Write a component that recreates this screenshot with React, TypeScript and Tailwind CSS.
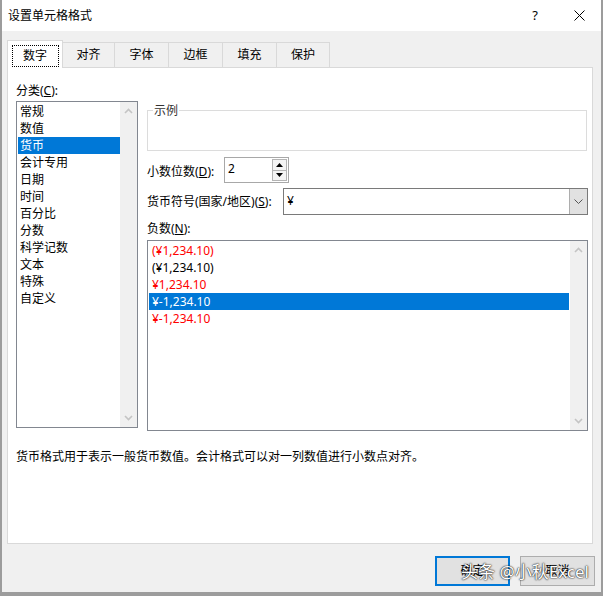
import React from 'react';

const FONT = { fontFamily: '"Noto Sans", "Noto Sans CJK SC", sans-serif' };

const categories = ['常规', '数值', '货币', '会计专用', '日期', '时间', '百分比', '分数', '科学记数', '文本', '特殊', '自定义'];

const negatives = [
  { text: '(¥1,234.10)', red: true },
  { text: '(¥1,234.10)', red: false },
  { text: '¥1,234.10', red: true },
  { text: '¥-1,234.10', red: false, selected: true },
  { text: '¥-1,234.10', red: true },
];

const tabs = [
  { label: '对齐', w: 'w-[53px]' },
  { label: '字体', w: 'w-[55px]' },
  { label: '边框', w: 'w-[55px]' },
  { label: '填充', w: 'w-[55px]' },
  { label: '保护', w: 'w-[54px]' },
];

// Scrollbar chevron
const Chevron = ({ up = false }: { up?: boolean }) => (
  <svg width="9" height="6" viewBox="0 0 9 6" className="block">
    <path
      d={up ? 'M1 5 L4.5 1.5 L8 5' : 'M1 1 L4.5 4.5 L8 1'}
      fill="none"
      stroke="#c4c4c4"
      strokeWidth="1.6"
    />
  </svg>
);

const ScrollTrack = () => (
  <div className="w-[17px] bg-[#f0f0f0] flex flex-col justify-between items-center py-[6px]">
    <Chevron up />
    <Chevron />
  </div>
);

export default function App() {
  return (
    <div className="w-[603px] h-[596px] bg-[#9c9c9c] relative overflow-hidden text-[12px] text-black" style={FONT}>
      <div className="ml-[2px] w-[599px] h-[592px] bg-[#f0f0f0] flex flex-col">
        {/* Title bar */}
        <div className="h-[31px] bg-white flex items-center pl-[6px] shrink-0">
          <span className="leading-[17px]">设置单元格格式</span>
          <span className="ml-auto text-[13px] mr-[36px]">?</span>
          <svg width="11" height="11" viewBox="0 0 11 11" className="mr-[16px]">
            <path d="M0.5 0.5 L10.5 10.5 M10.5 0.5 L0.5 10.5" stroke="#000" strokeWidth="1" />
          </svg>
        </div>

        <div className="pl-[5px] pr-[8px]">
          {/* Tabs */}
          <div className="flex items-end h-[27px] mt-[9px]">
            <div className="relative z-10 -mb-px h-[28px] w-[56px] bg-white border border-b-0 border-[#d9d9d9] flex items-center justify-center">
              <span className="border border-dotted border-black w-[47px] h-[22px] flex items-center justify-center mt-[3px]">数字</span>
            </div>
            {tabs.map((t) => (
              <div
                key={t.label}
                className={`${t.w} -ml-px h-[25px] border border-b-0 border-[#d9d9d9] bg-[#f0f0f0] flex items-center justify-center`}
              >
                {t.label}
              </div>
            ))}
          </div>

          {/* Panel */}
          <div className="h-[477px] border border-[#d9d9d9] bg-white pl-[8px] pt-[14px]">
            <div className="flex">
              {/* Category list */}
              <div className="w-[122px]">
                <div className="h-[17px] leading-[17px]">
                  分类(<span className="underline">C</span>):
                </div>
                <div className="mt-[2px] h-[327px] border border-[#828790] flex">
                  <div className="flex-1 pt-[1px] pl-[1px]">
                    {categories.map((c) => (
                      <div
                        key={c}
                        className={`h-[17px] leading-[17px] pl-[2px] ${c === '货币' ? 'bg-[#0078d7] text-white' : ''}`}
                      >
                        {c}
                      </div>
                    ))}
                  </div>
                  <ScrollTrack />
                </div>
              </div>

              {/* Right column */}
              <div className="ml-[9px] w-[441px]">
                {/* Sample group */}
                <div className="relative mt-[28px] h-[41px] w-[440px] border border-[#dcdcdc]">
                  <span className="absolute -top-[9px] left-[5px] bg-white px-[1px] leading-[17px] text-[#333]">示例</span>
                </div>

                {/* Decimal places */}
                <div className="flex items-center mt-[6px] h-[26px]">
                  <span className="w-[77px] leading-[17px] pt-[2px]">
                    小数位数(<span className="underline">D</span>):
                  </span>
                  <div className="w-[65px] h-[26px] border border-[#a8a8a8] flex">
                    <span className="flex-1 pl-[3px] leading-[22px]">2</span>
                    <div className="w-[16px] flex flex-col py-px pr-px">
                      <div className="flex-1 border border-[#b4b4b4] bg-[#f4f4f4] flex items-center justify-center">
                        <svg width="7" height="4" viewBox="0 0 7 4"><path d="M0 4 L3.5 0 L7 4 Z" fill="#000" /></svg>
                      </div>
                      <div className="flex-1 -mt-px border border-[#b4b4b4] bg-[#f4f4f4] flex items-center justify-center">
                        <svg width="7" height="4" viewBox="0 0 7 4"><path d="M0 0 L3.5 4 L7 0 Z" fill="#000" /></svg>
                      </div>
                    </div>
                  </div>
                </div>

                {/* Currency symbol */}
                <div className="flex items-center mt-[5px] h-[27px]">
                  <span className="w-[136px] leading-[17px]">
                    货币符号(国家/地区)(<span className="underline">S</span>):
                  </span>
                  <div className="w-[305px] h-[27px] border border-[#7a7a7a] flex">
                    <span className="flex-1 pl-[3px] leading-[24px]">¥</span>
                    <div className="w-[18px] bg-[#e1e1e1] border-l border-[#adadad] flex items-center justify-center">
                      <svg width="9" height="5" viewBox="0 0 9 5"><path d="M0.5 0.5 L4.5 4.5 L8.5 0.5" fill="none" stroke="#555" strokeWidth="1" /></svg>
                    </div>
                  </div>
                </div>

                {/* Negative numbers */}
                <div className="mt-[5px] h-[17px] leading-[17px]">
                  负数(<span className="underline">N</span>):
                </div>
                <div className="mt-[3px] h-[191px] border border-[#828790] flex">
                  <div className="flex-1 pt-[1px] pl-[1px] pr-[1px]">
                    {negatives.map((n, i) => (
                      <div
                        key={i}
                        className={`h-[17px] leading-[17px] pl-[3px] ${
                          n.selected ? 'bg-[#0078d7] text-white' : n.red ? 'text-[#ff0000]' : 'text-black'
                        }`}
                      >
                        {n.text}
                      </div>
                    ))}
                  </div>
                  <ScrollTrack />
                </div>
              </div>
            </div>

            <div className="mt-[17px] leading-[17px]">
              货币格式用于表示一般货币数值。会计格式可以对一列数值进行小数点对齐。
            </div>
          </div>
        </div>

        {/* Buttons */}
        <div className="flex justify-end gap-[10px] pr-[6px] mt-[12px]">
          <button className="w-[75px] h-[30px] border-2 border-[#0078d7] bg-[#e1e1e1] flex items-center justify-center">确定</button>
          <button className="w-[75px] h-[30px] border border-[#adadad] bg-[#e1e1e1] flex items-center justify-center">取消</button>
        </div>
      </div>

      {/* Watermark over the buttons */}
      <div
        className="absolute left-[461px] top-[561px] text-[17px] leading-[22px] text-white whitespace-nowrap [text-shadow:0_0_2px_rgba(0,0,0,0.9),0_0_1px_rgba(0,0,0,0.9)]"
        style={FONT}
      >
        头条 @小秋Excel
      </div>
    </div>
  );
}
